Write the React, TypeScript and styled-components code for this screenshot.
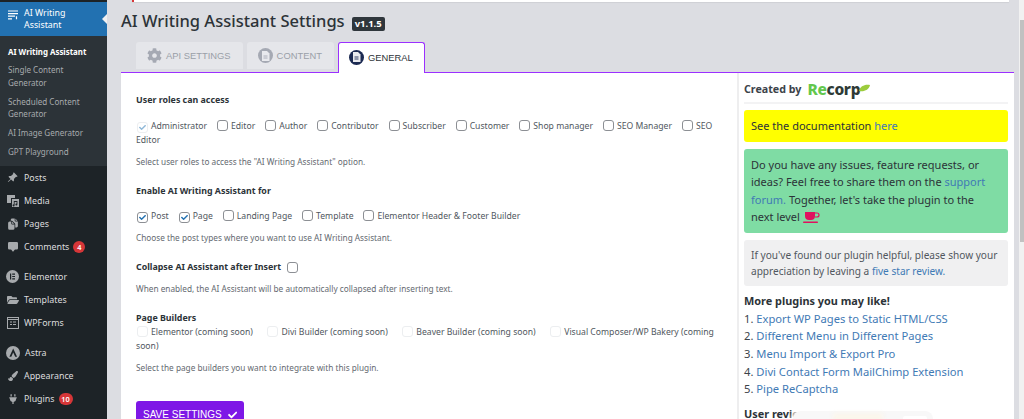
import * as React from 'react';
import styled, { createGlobalStyle } from 'styled-components';
import { BsChatSquareFill, BsPinAngleFill } from 'react-icons/bs';
import { FaCheck, FaCog, FaFolderOpen, FaPaintBrush, FaPlug } from 'react-icons/fa';
import { IoDocuments } from 'react-icons/io5';

const GlobalStyle = createGlobalStyle`
  html, body {
    margin: 0;
    padding: 0;
    height: 419px;
    overflow: hidden;
    background: #dcdde2;
  }
  body {
    font-family: "Noto Sans", "Open Sans", sans-serif;
    color: #3c434a;
  }
`;

const Page = styled.div`
  display: flex;
  width: 1024px;
  height: 419px;
  overflow: hidden;
`;

const Sidebar = styled.nav`
  flex: 0 0 107px;
  background: #1d2327;
  font-size: 8.85px;
  padding-top: 2px;
  overflow: hidden;
`;

const CurrentItem = styled.div`
  position: relative;
  display: flex;
  box-sizing: border-box;
  height: 34px;
  padding: 5px 0 0 8px;
  background: #2271b1;
  color: #fff;
  line-height: 12px;

  &::after {
    content: '';
    position: absolute;
    right: 0;
    top: 12px;
    border: 5px solid transparent;
    border-right-color: #f0f0f1;
  }
`;

const CurrentIcon = styled.span`
  flex: 0 0 16px;
  padding-top: 3px;
`;

const SubMenu = styled.div`
  box-sizing: border-box;
  height: 130px;
  background: #2c3338;
  padding: 9.5px 8px 0;
  display: flex;
  flex-direction: column;
  gap: 6.2px;
`;

const SubItem = styled.div<{ $active?: boolean }>`
  color: ${(p) => (p.$active ? '#fff' : '#a7aaad')};
  font-weight: ${(p) => (p.$active ? 700 : 400)};
  font-size: ${(p) => (p.$active ? '7.9px' : '8.05px')};
  line-height: 12.6px;
  white-space: nowrap;
`;

const MenuItem = styled.div<{ $gapAfter?: boolean }>`
  display: flex;
  align-items: center;
  height: 23px;
  padding-left: 6px;
  color: #dcdcde;
  margin-bottom: ${(p) => (p.$gapAfter ? '7.3px' : '0')};
  white-space: nowrap;
`;

const MenuIcon = styled.span`
  display: flex;
  align-items: center;
  justify-content: center;
  flex: 0 0 13px;
  height: 13px;
  margin-right: 5px;
  color: #a7aaad;
`;

const Badge = styled.span<{ $wide?: boolean }>`
  width: ${(p) => (p.$wide ? '14px' : '12px')};
  height: 12px;
  margin-left: 4px;
  border-radius: 6px;
  background: #d63638;
  color: #fff;
  font-size: 7.4px;
  font-weight: 600;
  line-height: 12px;
  text-align: center;
`;

const Main = styled.main`
  flex: 1;
  min-width: 0;
  display: flex;
  flex-direction: column;
`;

const TopNotice = styled.div`
  flex: 0 0 2px;
  margin: 0 10px 0 25px;
  background: #fff;
  border-left: 2px solid #d63638;
  box-shadow: 0 1px 1px rgba(0, 0, 0, 0.06);
`;

const TitleRow = styled.div`
  display: flex;
  align-items: center;
  gap: 7px;
  box-sizing: border-box;
  height: 40px;
  padding: 5px 0 7px 14px;
`;

const Title = styled.h1`
  margin: 0;
  font-size: 16.5px;
  font-weight: 500;
  line-height: 28px;
  color: #2c3338;
`;

const Version = styled.span`
  margin-top: 6px;
  padding: 0 3px;
  height: 14px;
  background: #2f363c;
  color: #fff;
  font-size: 9.5px;
  font-weight: 700;
  line-height: 14px;
  border-radius: 2px;
`;

const Tabs = styled.div`
  display: flex;
  align-items: flex-start;
  gap: 4px;
  box-sizing: border-box;
  height: 31px;
  margin: 0 5px 0 14px;
  padding-left: 15px;
  border-bottom: 1.5px solid #9b30ff;
`;

const Tab = styled.div<{ $active?: boolean }>`
  display: flex;
  align-items: center;
  gap: 4px;
  box-sizing: border-box;
  height: ${(p) => (p.$active ? '31px' : '27px')};
  padding: ${(p) => (p.$active ? '0 11px 2px 10px' : '0 12px 0 11px')};
  font-family: "Liberation Sans", Arial, sans-serif;
  font-size: 9.4px;
  color: ${(p) => (p.$active ? '#2c3338' : '#9aa0a8')};
  background: ${(p) => (p.$active ? '#fff' : '#e5e6ea')};
  border-radius: 3px 3px 0 0;
  border: ${(p) => (p.$active ? '1px solid #9b30ff' : '0')};
  border-bottom: 0;
`;

const TabIcon = styled.span<{ $active?: boolean; $bare?: boolean }>`
  display: flex;
  align-items: center;
  justify-content: center;
  width: 15px;
  height: 15px;
  border-radius: 50%;
  background: ${(p) => (p.$bare ? 'transparent' : p.$active ? '#1c2a52' : '#a5a9b3')};
  color: ${(p) => (p.$bare ? '#a5a9b3' : '#e9eaee')};
`;

const Columns = styled.div`
  flex: 1;
  min-height: 0;
  display: flex;
  margin: 0 5px 0 14px;
`;

const Panel = styled.section`
  flex: 0 0 616px;
  box-sizing: border-box;
  background: #fff;
  padding: 20px 15px 0;
`;

const GroupTitle = styled.div`
  font-size: 8.85px;
  font-weight: 700;
  color: #2c3338;
  line-height: 14px;
`;

const Options = styled.div<{ $tight?: boolean }>`
  margin-top: ${(p) => (p.$tight ? '0' : '11.5px')};
  line-height: 14px;
  font-size: 8.65px;
  color: #50575e;
`;

const Option = styled.span<{ $spaced?: boolean }>`
  margin-right: ${(p) => (p.$spaced ? '11.3px' : '6.7px')};
`;

const Box = styled.span<{ $faint?: boolean }>`
  display: inline-flex;
  align-items: center;
  justify-content: center;
  vertical-align: -2px;
  width: 11px;
  height: 11px;
  margin: 0 3px 0 1px;
  box-sizing: border-box;
  border: 1px solid ${(p) => (p.$faint ? '#eceef0' : '#8c8f94')};
  border-radius: 3px;
  background: #fff;
  color: #2271b1;
`;

const Hint = styled.p`
  margin: 8px 0 15px;
  line-height: 14px;
  font-size: 8.25px;
  color: #646970;
`;

const InlineGroup = styled.div`
  display: flex;
  align-items: center;
  gap: 5px;
`;

const SaveButton = styled.button`
  display: flex;
  align-items: center;
  gap: 6px;
  margin-top: 26px;
  width: 108px;
  height: 27px;
  padding: 0 7px;
  border: 0;
  border-radius: 3px;
  background: #7e17e6;
  color: #fff;
  font-family: "Liberation Sans", Arial, sans-serif;
  font-size: 10px;
  white-space: nowrap;
`;

const Aside = styled.aside`
  position: relative;
  flex: 1;
  min-width: 0;
  background: #fff;
  border-left: 2px solid #eeeeef;
  padding: 7px 6px 0 5px;
  font-size: 11px;
  color: #3c434a;
  overflow: hidden;
`;

const Credit = styled.div`
  display: flex;
  align-items: center;
  gap: 6px;
  box-sizing: border-box;
  height: 24px;
  padding-bottom: 5px;
  border-bottom: 2px solid #f3f3f4;
  font-weight: 700;
  font-size: 10.7px;
`;

const Logo = styled.span`
  display: inline-flex;
  align-items: flex-start;
  margin-top: 3px;
  font-weight: 800;
  font-size: 15.5px;
  letter-spacing: -0.3px;
  color: #2e3a36;
  line-height: 1;
`;

const LogoGreen = styled.span`
  color: #63c74d;
`;

const LogoLeaf = styled.svg`
  margin: 2px 0 0 -1px;
`;

const Callout = styled.div<{ $bg: string }>`
  margin-top: 7px;
  padding: 7px;
  background: ${(p) => p.$bg};
  border-radius: 3px;
  line-height: 17.6px;
  color: #2c3338;
`;

const FirstCallout = styled(Callout)`
  margin-top: 6px;
`;

const GreenCallout = styled(Callout)`
  padding-right: 12px;
`;

const GrayCallout = styled(Callout)`
  font-size: 10.1px;
  line-height: 16px;
  color: #50575e;
`;

const Link = styled.a`
  color: #3f7ab5;
  text-decoration: none;
`;

const ListTitle = styled.div`
  margin-top: 6px;
  font-weight: 700;
  font-size: 10.9px;
  color: #2c3338;
  line-height: 17.6px;
`;

const PluginRow = styled.div`
  line-height: 17.7px;
  font-size: 11.2px;
`;

const ReviewsTitle = styled(ListTitle)`
  margin-top: 7px;
`;

const FloatingCard = styled.div`
  position: absolute;
  left: 54px;
  top: 338px;
  width: 140px;
  height: 30px;
  border-radius: 8px 8px 0 0;
  background: #f8f8f8;
  box-shadow: 0 0 4px 2px #fff;

  &::before {
    content: '';
    position: absolute;
    left: 40px;
    top: 2px;
    width: 50px;
    height: 12px;
    background: #fbf6ec;
    filter: blur(2px);
  }

  &::after {
    content: '';
    position: absolute;
    left: 110px;
    top: 5px;
    width: 24px;
    height: 20px;
    border-radius: 2px;
    background: #fff;
  }
`;

const Scrollbar = styled.div`
  flex: 0 0 5px;
  background: #f1f1f1;
`;

const ScrollThumb = styled.div`
  height: 222px;
  margin: 20px 0 0 1px;
  background: #c1c1c1;
`;

const Cup = () => (
  <svg width="17" height="16" viewBox="0 0 17 16" style={{ verticalAlign: -3 }}>
    <path d="M5 3c-1-1 1-1 0-2M8 3c-1-1 1-1 0-2" fill="none" stroke="#e8a0b8" strokeWidth="0.7" />
    <path d="M2 4h10v4a4 4 0 0 1-4 4H6a4 4 0 0 1-4-4z" fill="#e0115f" />
    <path d="M12 5h2a1.5 1.5 0 0 1 0 4h-2" fill="none" stroke="#e0115f" strokeWidth="1.2" />
    <rect x="0" y="13.5" width="15" height="1.4" rx="0.7" fill="#e0115f" />
  </svg>
);

const GridIcon = () => (
  <svg width="10" height="10" viewBox="0 0 10 10" fill="none" stroke="#fff" strokeWidth="1.2">
    <path d="M0 1h10M0 3.6h10M0 6.2h7M0 8.8h4M8.5 6.2v3" />
  </svg>
);

const MediaIcon = () => (
  <svg width="12" height="12" viewBox="0 0 12 12" fill="currentColor">
    <path d="M0 0h8v3H4v5H0z" />
    <path d="M5 4h7v8H5zM6.8 6v3.4a1 1 0 1 0 .8 1V7h2v1.6a1 1 0 1 0 .8 1V6z" fillRule="evenodd" />
  </svg>
);

const ElementorMark = () => (
  <svg width="13" height="13" viewBox="0 0 13 13">
    <circle cx="6.5" cy="6.5" r="6.5" fill="#a7aaad" />
    <path d="M4 3.5h1.2v6H4zM6.2 3.5H9v1.2H6.2zM6.2 5.9H9v1.2H6.2zM6.2 8.3H9v1.2H6.2z" fill="#1d2327" />
  </svg>
);

const FormsIcon = () => (
  <svg width="12" height="12" viewBox="0 0 12 12" fill="none" stroke="#a7aaad">
    <rect x="0.5" y="0.5" width="11" height="11" />
    <path d="M0.5 2.5h11M3 5h2M6 5h3M3 7.5h2M6 7.5h3" />
  </svg>
);

const AstraMark = () => (
  <svg width="14" height="14" viewBox="0 0 14 14">
    <circle cx="7" cy="7" r="7" fill="#a7aaad" />
    <path d="M7.2 2.6 3.4 10.8h1.9l1.9-4.2 2 4.2h1.9z" fill="#1d2327" />
  </svg>
);

const DocIcon = ({ color }: { color: string }) => (
  <svg width="9" height="10" viewBox="0 0 9 10">
    <path d="M1 0h5l2.5 2.5V10H1z" fill="#e9eaee" />
    <path d="M2.5 5h4M2.5 7h4" stroke={color} strokeWidth="0.9" />
  </svg>
);

const roles = [
  'Administrator',
  'Editor',
  'Author',
  'Contributor',
  'Subscriber',
  'Customer',
  'Shop manager',
  'SEO Manager',
  'SEO Editor',
];
const postTypes = ['Post', 'Page', 'Landing Page', 'Template', 'Elementor Header & Footer Builder'];
const builders = [
  'Elementor (coming soon)',
  'Divi Builder (coming soon)',
  'Beaver Builder (coming soon)',
  'Visual Composer/WP Bakery (coming soon)',
];
const plugins = [
  'Export WP Pages to Static HTML/CSS',
  'Different Menu in Different Pages',
  'Menu Import & Export Pro',
  'Divi Contact Form MailChimp Extension',
  'Pipe ReCaptcha',
];

export default function App() {
  return (
    <Page>
      <GlobalStyle />
      <Sidebar>
        <CurrentItem>
          <CurrentIcon>
            <GridIcon />
          </CurrentIcon>
          <span>
            AI Writing
            <br />
            Assistant
          </span>
        </CurrentItem>
        <SubMenu>
          <SubItem $active>AI Writing Assistant</SubItem>
          <SubItem>
            Single Content
            <br />
            Generator
          </SubItem>
          <SubItem>
            Scheduled Content
            <br />
            Generator
          </SubItem>
          <SubItem>AI Image Generator</SubItem>
          <SubItem>GPT Playground</SubItem>
        </SubMenu>
        <MenuItem>
          <MenuIcon><BsPinAngleFill size={11} /></MenuIcon>Posts
        </MenuItem>
        <MenuItem>
          <MenuIcon><MediaIcon /></MenuIcon>Media
        </MenuItem>
        <MenuItem>
          <MenuIcon><IoDocuments size={12} /></MenuIcon>Pages
        </MenuItem>
        <MenuItem $gapAfter>
          <MenuIcon><BsChatSquareFill size={10} /></MenuIcon>Comments
          <Badge>4</Badge>
        </MenuItem>
        <MenuItem>
          <MenuIcon><ElementorMark /></MenuIcon>Elementor
        </MenuItem>
        <MenuItem>
          <MenuIcon><FaFolderOpen size={12} /></MenuIcon>Templates
        </MenuItem>
        <MenuItem $gapAfter>
          <MenuIcon><FormsIcon /></MenuIcon>WPForms
        </MenuItem>
        <MenuItem>
          <MenuIcon><AstraMark /></MenuIcon>Astra
        </MenuItem>
        <MenuItem>
          <MenuIcon><FaPaintBrush size={10} /></MenuIcon>Appearance
        </MenuItem>
        <MenuItem>
          <MenuIcon><FaPlug size={10} /></MenuIcon>Plugins
          <Badge $wide>10</Badge>
        </MenuItem>
      </Sidebar>
      <Main>
        <TopNotice />
        <TitleRow>
          <Title>AI Writing Assistant Settings</Title>
          <Version>v1.1.5</Version>
        </TitleRow>
        <Tabs>
          <Tab>
            <TabIcon $bare><FaCog size={15} /></TabIcon>API SETTINGS
          </Tab>
          <Tab>
            <TabIcon><DocIcon color="#a5a9b3" /></TabIcon>CONTENT
          </Tab>
          <Tab $active>
            <TabIcon $active><DocIcon color="#1c2a52" /></TabIcon>GENERAL
          </Tab>
        </Tabs>
        <Columns>
          <Panel>
            <GroupTitle>User roles can access</GroupTitle>
            <Options>
              {roles.map((role, i) => (
                <React.Fragment key={role}>
                  <Option>
                    <Box $faint={i === 0}>{i === 0 && <FaCheck size={7} color="#8fb8d8" />}</Box>
                    {role}
                  </Option>{' '}
                </React.Fragment>
              ))}
            </Options>
            <Hint>Select user roles to access the "AI Writing Assistant" option.</Hint>
            <GroupTitle>Enable AI Writing Assistant for</GroupTitle>
            <Options>
              {postTypes.map((type, i) => (
                <React.Fragment key={type}>
                  <Option>
                    <Box>{i < 2 && <FaCheck size={7} />}</Box>
                    {type}
                  </Option>{' '}
                </React.Fragment>
              ))}
            </Options>
            <Hint>Choose the post types where you want to use AI Writing Assistant.</Hint>
            <InlineGroup>
              <GroupTitle>Collapse AI Assistant after Insert</GroupTitle>
              <Box />
            </InlineGroup>
            <Hint>When enabled, the AI Assistant will be automatically collapsed after inserting text.</Hint>
            <GroupTitle>Page Builders</GroupTitle>
            <Options $tight>
              {builders.map((b) => (
                <React.Fragment key={b}>
                  <Option $spaced>
                    <Box $faint />
                    {b}
                  </Option>{' '}
                </React.Fragment>
              ))}
            </Options>
            <Hint>Select the page builders you want to integrate with this plugin.</Hint>
            <SaveButton>
              SAVE SETTINGS <FaCheck size={10} />
            </SaveButton>
          </Panel>
          <Aside>
            <Credit>
              Created by
              <Logo>
                <LogoGreen>Re</LogoGreen>corp
                <LogoLeaf width="11" height="8" viewBox="0 0 11 8">
                  <path d="M0 7C1 2 6 0 11 1 10 6 5 8 0 7z" fill="#9ccc3c" />
                </LogoLeaf>
              </Logo>
            </Credit>
            <FirstCallout $bg="#ffff00">
              See the documentation <Link>here</Link>
            </FirstCallout>
            <GreenCallout $bg="#7fdca4">
              Do you have any issues, feature requests, or ideas? Feel free to share them on the{' '}
              <Link>support forum.</Link> Together, let's take the plugin to the next level <Cup />
            </GreenCallout>
            <GrayCallout $bg="#f0f0f1">
              If you've found our plugin helpful, please show your appreciation by leaving a{' '}
              <Link>five star review.</Link>
            </GrayCallout>
            <ListTitle>More plugins you may like!</ListTitle>
            {plugins.map((name, i) => (
              <PluginRow key={name}>
                {i + 1}. <Link>{name}</Link>
              </PluginRow>
            ))}
            <ReviewsTitle>User reviews</ReviewsTitle>
            <FloatingCard />
          </Aside>
        </Columns>
      </Main>
      <Scrollbar>
        <ScrollThumb />
      </Scrollbar>
    </Page>
  );
}
